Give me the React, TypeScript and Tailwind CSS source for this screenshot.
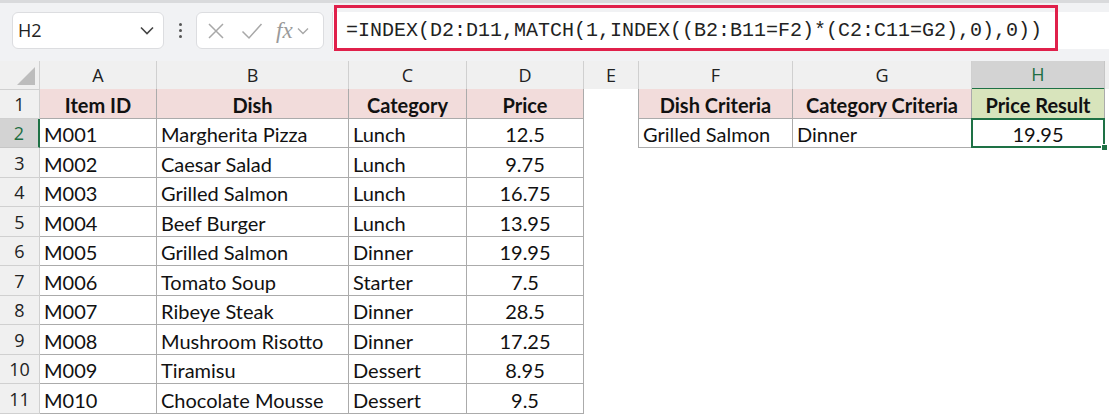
import React from "react";

// ---------------------------------------------------------------------------
// Sheet data
// ---------------------------------------------------------------------------
const COLS = ["A", "B", "C", "D", "E", "F", "G", "H"];

const ROWS: [string, string, string, string][] = [
  ["M001", "Margherita Pizza", "Lunch", "12.5"],
  ["M002", "Caesar Salad", "Lunch", "9.75"],
  ["M003", "Grilled Salmon", "Lunch", "16.75"],
  ["M004", "Beef Burger", "Lunch", "13.95"],
  ["M005", "Grilled Salmon", "Dinner", "19.95"],
  ["M006", "Tomato Soup", "Starter", "7.5"],
  ["M007", "Ribeye Steak", "Dinner", "28.5"],
  ["M008", "Mushroom Risotto", "Dinner", "17.25"],
  ["M009", "Tiramisu", "Dessert", "8.95"],
  ["M010", "Chocolate Mousse", "Dessert", "9.5"],
];

const FORMULA = "=INDEX(D2:D11,MATCH(1,INDEX((B2:B11=F2)*(C2:C11=G2),0),0))";

const cellFont = { fontFamily: "Lato, 'Open Sans', sans-serif" };

// ---------------------------------------------------------------------------
// Toolbar
// ---------------------------------------------------------------------------
function FormulaBar() {
  return (
    <div className="relative h-[61px] border-t-[3px] border-[#d9dadc] bg-[#f1f2f4]">
      <div className="flex items-center pt-[9px]">
        {/* Name box */}
        <div className="ml-[12px] flex h-[37px] w-[152px] items-center justify-between rounded-[6px] border border-[#dcdde0] bg-white pl-[5px] pr-[9px]">
          <span className="text-[18px] text-[#222]" style={{ fontFamily: "'Open Sans', sans-serif" }}>
            H2
          </span>
          <svg width="14" height="9" viewBox="0 0 14 9" fill="none" stroke="#444" strokeWidth="1.6">
            <path d="M1 1.5 7 7.5 13 1.5" />
          </svg>
        </div>

        {/* Splitter dots */}
        <div className="flex w-[32px] flex-col items-center gap-[3px]">
          <span className="h-[3px] w-[3px] rounded-full bg-[#555]" />
          <span className="h-[3px] w-[3px] rounded-full bg-[#555]" />
          <span className="h-[3px] w-[3px] rounded-full bg-[#555]" />
        </div>

        {/* Function buttons */}
        <div className="flex h-[37px] w-[128px] items-center rounded-[6px] border border-[#dcdde0] bg-white pl-[10px]">
          <svg width="18" height="18" viewBox="0 0 18 18" stroke="#a8a8a8" strokeWidth="1.5" fill="none">
            <path d="M2 2 16 16M16 2 2 16" />
          </svg>
          <svg className="ml-[16px]" width="22" height="18" viewBox="0 0 22 18" stroke="#a8a8a8" strokeWidth="1.5" fill="none">
            <path d="M1.5 9.5 8 16 20.5 2" />
          </svg>
          <span
            className="ml-[13px] text-[23px] italic leading-none text-[#9a9a9a]"
            style={{ fontFamily: "'Liberation Serif', serif" }}
          >
            fx
          </span>
          <svg className="ml-[4px]" width="12" height="8" viewBox="0 0 12 8" fill="none" stroke="#a8a8a8" strokeWidth="1.4">
            <path d="M1 1.5 6 6.5 11 1.5" />
          </svg>
        </div>

        {/* Formula input */}
        <div className="ml-[8px] flex h-[37px] flex-1 items-center border-l border-[#dcdde0] bg-white pl-[13px]">
          <span
            className="whitespace-pre text-[20px] text-[#222]"
            style={{ fontFamily: "'Liberation Mono', monospace" }}
          >
            {FORMULA}
          </span>
        </div>
      </div>

      {/* Highlight annotation */}
      <div className="pointer-events-none absolute left-[334px] top-[2px] h-[46px] w-[724px] border-[3px] border-[#e0204b]" />
    </div>
  );
}

// ---------------------------------------------------------------------------
// Grid
// ---------------------------------------------------------------------------
const GRID_COLS = "grid-cols-[40px_117px_192px_118px_117px_55px_154px_179px_133px_1fr]";

function ColumnHeaders() {
  return (
    <div className={`grid h-[28px] ${GRID_COLS} bg-[#f0f0f0]`}>
      <div className="relative border-r border-b border-[#d0d0d0]">
        <div className="absolute bottom-[4px] right-[4px] h-0 w-0 border-b-[18px] border-l-[18px] border-b-[#bdbdbd] border-l-transparent" />
      </div>
      {COLS.map((c) =>
        c === "H" ? (
          <div
            key={c}
            className="flex items-center justify-center border-r border-b-2 border-r-[#c6c6c6] border-b-[#1e7145] bg-[#d3d3d3] text-[18px] text-[#1e6e42]"
            style={{ fontFamily: "'Open Sans', sans-serif" }}
          >
            {c}
          </div>
        ) : (
          <div
            key={c}
            className="flex items-center justify-center border-r border-b border-[#d0d0d0] text-[18px] text-[#222]"
            style={{ fontFamily: "'Open Sans', sans-serif" }}
          >
            {c}
          </div>
        ),
      )}
      <div className="border-b border-[#d0d0d0]" />
    </div>
  );
}

function RowHeader({ n }: { n: number }) {
  const selected = n === 2;
  return (
    <div
      className={`flex items-center justify-center border-b pt-[2px] text-[18px] ${
        selected
          ? "border-r-2 border-r-[#1e7145] border-b-[#c6c6c6] bg-[#d3d3d3] text-[#1e6e42]"
          : "border-r border-[#d0d0d0] bg-[#f0f0f0] text-[#222]"
      }`}
      style={{ fontFamily: "'Open Sans', sans-serif" }}
    >
      {n}
    </div>
  );
}

function Cell({
  children,
  align = "left",
  bold = false,
  bg = "bg-white",
}: {
  children?: React.ReactNode;
  align?: "left" | "center";
  bold?: boolean;
  bg?: string;
}) {
  return (
    <div
      className={`flex items-center overflow-hidden whitespace-nowrap border-r border-b border-[#ababab] px-[4px] pt-[3px] text-[20px] text-[#111] ${bg} ${
        align === "center" ? "justify-center" : "justify-start"
      } ${bold ? "font-bold" : ""}`}
      style={cellFont}
    >
      {children}
    </div>
  );
}

function Blank({ right = false }: { right?: boolean }) {
  return <div className={`bg-white ${right ? "border-r border-[#ababab]" : ""}`} />;
}

function Sheet() {
  return (
    <div className={`grid ${GRID_COLS} auto-rows-[29.5px]`}>
      {/* Row 1 */}
      <RowHeader n={1} />
      <Cell align="center" bold bg="bg-[#f2dcdb]">Item ID</Cell>
      <Cell align="center" bold bg="bg-[#f2dcdb]">Dish</Cell>
      <Cell align="center" bold bg="bg-[#f2dcdb]">Category</Cell>
      <Cell align="center" bold bg="bg-[#f2dcdb]">Price</Cell>
      <Blank right />
      <Cell align="center" bold bg="bg-[#f2dcdb]">Dish Criteria</Cell>
      <Cell align="center" bold bg="bg-[#f2dcdb]">Category Criteria</Cell>
      <Cell align="center" bold bg="bg-[#d8e4bc]">Price Result</Cell>
      <Blank />

      {ROWS.map((r, i) => {
        const n = i + 2;
        return (
          <React.Fragment key={n}>
            <RowHeader n={n} />
            <Cell>{r[0]}</Cell>
            <Cell>{r[1]}</Cell>
            <Cell>{r[2]}</Cell>
            <Cell align="center">{r[3]}</Cell>
            {n === 2 ? (
              <>
                <Blank right />
                <Cell>Grilled Salmon</Cell>
                <Cell>Dinner</Cell>
                <div className="relative">
                  <div
                    className="absolute -left-[1px] -top-[1px] bottom-0 right-0 flex items-center justify-center border-2 border-[#1e7145] bg-white pt-[3px] text-[20px] text-[#111]"
                    style={cellFont}
                  >
                    19.95
                  </div>
                  <div className="absolute -bottom-[3px] -right-[3px] h-[7px] w-[7px] border border-white bg-[#1e7145]" />
                </div>
                <Blank />
              </>
            ) : (
              <>
                <Blank />
                <Blank />
                <Blank />
                <Blank />
                <Blank />
              </>
            )}
          </React.Fragment>
        );
      })}
    </div>
  );
}

export default function App() {
  return (
    <div className="h-[416px] w-[1109px] overflow-hidden bg-white">
      <FormulaBar />
      <ColumnHeaders />
      <Sheet />
    </div>
  );
}
